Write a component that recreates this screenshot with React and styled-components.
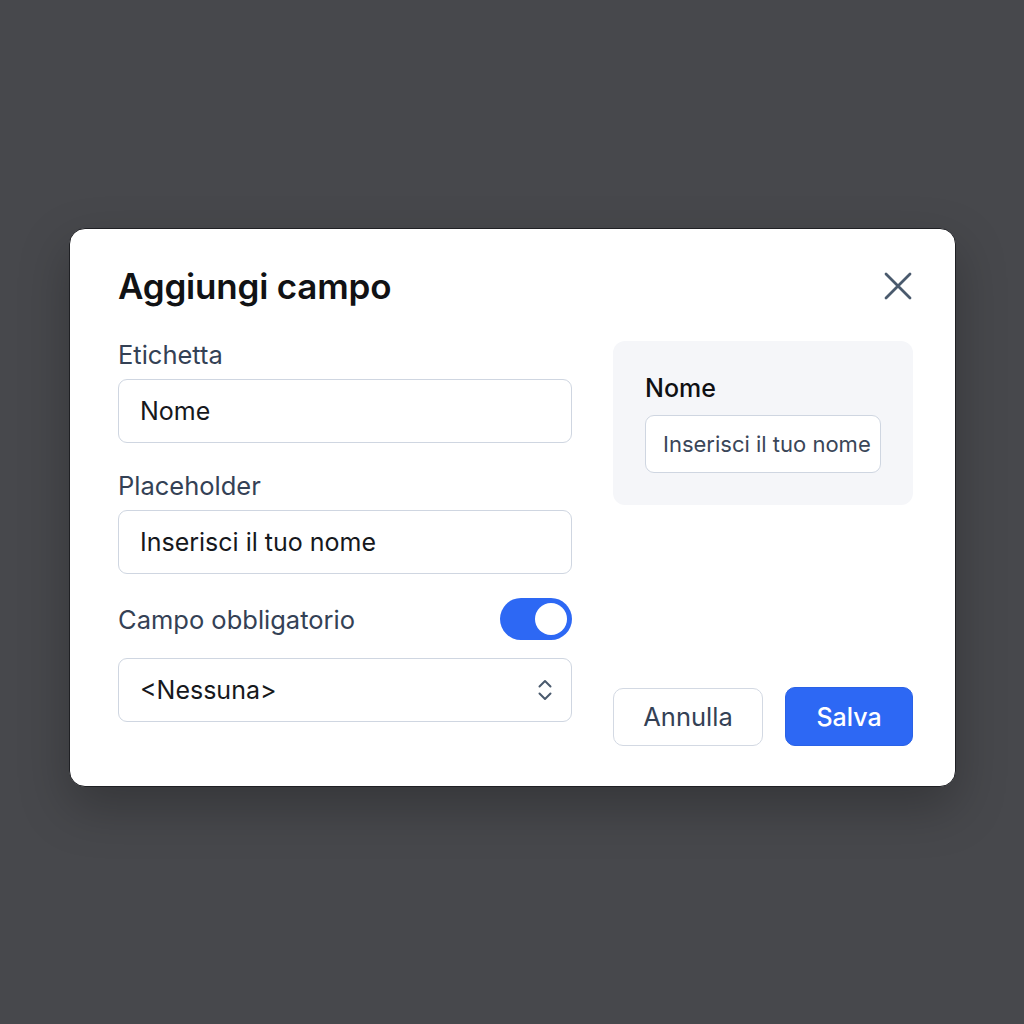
import React from "react";
import styled, { createGlobalStyle } from "styled-components";

const Global = createGlobalStyle`
  html, body { margin: 0; padding: 0; background: #47484c; }
  body { font-family: Inter, "Noto Sans", sans-serif; }
  * { box-sizing: border-box; }
`;

const Page = styled.div`
  width: 1024px;
  height: 1024px;
  background: #47484c;
  padding: 228px 0 0 69px;
`;

const Dialog = styled.div`
  width: 887px;
  background: #ffffff;
  border: 1px solid #1f2024;
  border-radius: 16px;
  padding: 37px 42px 40px 48px;
  box-shadow: 0 20px 50px rgba(0, 0, 0, 0.25);
`;

const Header = styled.div`
  display: flex;
  align-items: center;
  justify-content: space-between;
  height: 40px;
`;

const Title = styled.h1`
  margin: 0;
  font-size: 35px;
  line-height: 40px;
  font-weight: 600;
  color: #111214;
  letter-spacing: -0.2px;
`;

const CloseButton = styled.button`
  border: 0;
  background: none;
  padding: 0;
  width: 28px;
  height: 28px;
  display: flex;
  align-items: center;
  justify-content: center;
  margin-right: 1px;
  color: #4a5a6d;
`;

const Body = styled.div`
  display: grid;
  grid-template-columns: 454px 300px;
  column-gap: 41px;
  margin-top: 35px;
`;

const Column = styled.div`
  display: flex;
  flex-direction: column;
`;

const Label = styled.label`
  display: block;
  font-size: 25.5px;
  line-height: 28px;
  color: #344155;
  margin-top: ${(p) => p.$top || 0}px;
  margin-bottom: 10px;
`;

const Field = styled.div`
  height: 64px;
  border: 1.5px solid #cfd6e1;
  border-radius: 9px;
  display: flex;
  align-items: center;
  justify-content: space-between;
  padding: 0 18px 0 21px;
  font-size: 25px;
  color: #16181c;
  background: #fff;
`;

const ToggleRow = styled.div`
  display: flex;
  align-items: center;
  justify-content: space-between;
  margin-top: 24px;
  margin-bottom: 18px;
  font-size: 25.5px;
  color: #344155;
`;

const Toggle = styled.div`
  width: 72px;
  height: 42px;
  border-radius: 21px;
  background: #2d68f4;
  display: flex;
  align-items: center;
  justify-content: flex-end;
  padding-right: 5px;
`;

const Knob = styled.div`
  width: 32px;
  height: 32px;
  border-radius: 50%;
  background: #fff;
`;

const RightColumn = styled.div`
  display: flex;
  flex-direction: column;
  justify-content: space-between;
`;

const Preview = styled.div`
  background: #f5f6f9;
  border-radius: 12px;
  padding: 33px 32px 32px 32px;
  height: 164px;
`;

const PreviewLabel = styled.div`
  font-size: 25px;
  line-height: 28px;
  font-weight: 500;
  color: #0f1013;
  margin-bottom: 13px;
`;

const PreviewInput = styled.div`
  height: 58px;
  border: 1.5px solid #cfd6e1;
  border-radius: 9px;
  background: #fff;
  display: flex;
  align-items: center;
  padding-left: 17px;
  font-size: 22px;
  color: #3a4658;
  white-space: nowrap;
  overflow: hidden;
`;

const Actions = styled.div`
  display: flex;
  justify-content: space-between;
  align-items: center;
  margin-top: 182px;
`;

const Button = styled.button`
  height: ${(p) => (p.$primary ? 59 : 58)}px;
  width: ${(p) => (p.$primary ? 128 : 150)}px;
  border-radius: 10px;
  font-family: Inter, "Noto Sans", sans-serif;
  font-size: ${(p) => (p.$primary ? 25 : 25.5)}px;
  font-weight: ${(p) => (p.$primary ? 500 : 400)};
  border: ${(p) => (p.$primary ? "1px solid #2a62e6" : "1.5px solid #d3d9e3")};
  background: ${(p) => (p.$primary ? "#2d68f4" : "#fff")};
  color: ${(p) => (p.$primary ? "#fff" : "#344155")};
  padding: 0;
`;

export default function App() {
  return (
    <>
      <Global />
      <Page>
        <Dialog>
          <Header>
            <Title>Aggiungi campo</Title>
            <CloseButton aria-label="Chiudi">
              <svg width="28" height="28" viewBox="0 0 28 28" fill="none">
                <path d="M2 2 L26 26 M26 2 L2 26" stroke="currentColor" strokeWidth="2.8" strokeLinecap="round" />
              </svg>
            </CloseButton>
          </Header>
          <Body>
            <Column>
              <Label>Etichetta</Label>
              <Field>Nome</Field>
              <Label $top={29}>Placeholder</Label>
              <Field>Inserisci il tuo nome</Field>
              <ToggleRow>
                <span>Campo obbligatorio</span>
                <Toggle>
                  <Knob />
                </Toggle>
              </ToggleRow>
              <Field>
                <span>&lt;Nessuna&gt;</span>
                <svg width="16" height="24" viewBox="0 0 16 24" fill="none">
                  <path d="M2.5 8.5 L8 3 L13.5 8.5 M2.5 15.5 L8 21 L13.5 15.5" stroke="#4a5a6d" strokeWidth="2" strokeLinecap="round" strokeLinejoin="round" />
                </svg>
              </Field>
            </Column>
            <RightColumn>
              <Preview>
                <PreviewLabel>Nome</PreviewLabel>
                <PreviewInput>Inserisci il tuo nome</PreviewInput>
              </Preview>
              <Actions>
                <Button>Annulla</Button>
                <Button $primary>Salva</Button>
              </Actions>
            </RightColumn>
          </Body>
        </Dialog>
      </Page>
    </>
  );
}
